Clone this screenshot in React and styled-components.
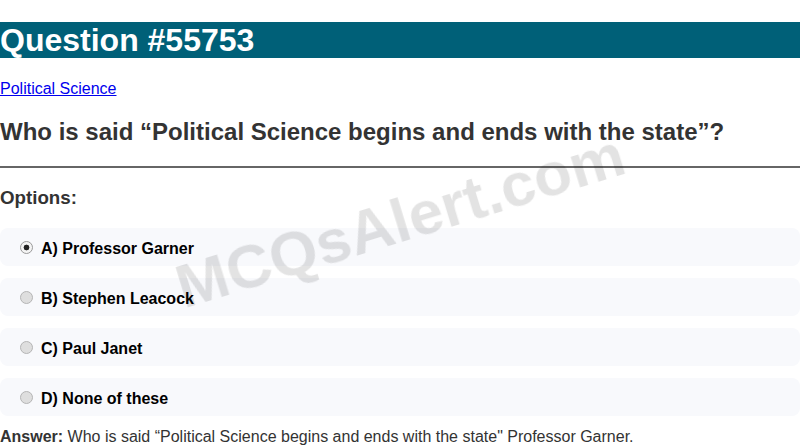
import React from "react";
import styled, { createGlobalStyle } from "styled-components";

const GlobalStyle = createGlobalStyle`
  body {
    margin: 0;
    font-family: "Liberation Sans", Arial, sans-serif;
    background: #fff;
  }
`;

const options = [
  { id: "a", label: "A) Professor Garner", checked: true },
  { id: "b", label: "B) Stephen Leacock" },
  { id: "c", label: "C) Paul Janet" },
  { id: "d", label: "D) None of these" },
];

export default function App() {
  return (
    <Page>
      <GlobalStyle />
      <Title>Question #55753</Title>
      <Category>
        <a href="#">Political Science</a>
      </Category>
      <QuestionText>
        Who is said “Political Science begins and ends with the state”?
      </QuestionText>
      <Divider />
      <OptionsTitle>Options:</OptionsTitle>
      {options.map((opt) => (
        <OptionRow key={opt.id}>
          <Radio type="radio" name="q" defaultChecked={opt.checked} />
          <OptionLabel>{opt.label}</OptionLabel>
        </OptionRow>
      ))}
      <Answer>
        <strong>Answer:</strong> Who is said “Political Science begins and ends
        with the state" Professor Garner.
      </Answer>
      <Watermark>MCQsAlert.com</Watermark>
    </Page>
  );
}

const Page = styled.div`
  position: relative;
  color: #333;
`;

const Title = styled.h1`
  margin: 22px 0 22px;
  background: #006078;
  color: #fff;
  font-size: 32px;
  font-weight: 700;
  line-height: 36px;
`;

const Category = styled.p`
  margin: 0;
  font-size: 16px;

  a {
    color: #0000ee;
  }
`;

const QuestionText = styled.h2`
  margin: 20px 0;
  font-size: 24px;
  font-weight: 700;
  color: #333;
`;

const Divider = styled.hr`
  margin: 0;
  border: none;
  border-top: 2px solid #666;
`;

const OptionsTitle = styled.h3`
  margin: 18.72px 0 19px;
  font-size: 18.72px;
  font-weight: 700;
  color: #333;
`;

const OptionRow = styled.label`
  display: flex;
  align-items: center;
  height: 38px;
  margin-bottom: 12px;
  padding: 2px 15px 0;
  box-sizing: border-box;
  background: #f8f9fc;
  border-radius: 8px;
`;

const Radio = styled.input`
  appearance: none;
  margin: 0 3px 0 5px;
  width: 13px;
  height: 13px;
  border-radius: 50%;
  border: 1px solid #b5b5b5;
  background: #dedede;
  box-sizing: border-box;

  &:checked {
    background: radial-gradient(circle, #222 0 2.6px, #f4f4f4 3.2px 100%);
    border-color: #9a9a9a;
  }
`;

const OptionLabel = styled.span`
  margin: 2px 0 0 5px;
  font-size: 16px;
  font-weight: 700;
  color: #000;
`;

const Answer = styled.p`
  margin: 0;
  font-size: 16px;
  color: #333;
`;

const Watermark = styled.div`
  position: fixed;
  left: 400px;
  top: 220px;
  transform: translate(-50%, -50%) rotate(-17deg);
  font-size: 62px;
  font-weight: 700;
  color: rgba(0, 0, 0, 0.11);
  white-space: nowrap;
  pointer-events: none;
`;
